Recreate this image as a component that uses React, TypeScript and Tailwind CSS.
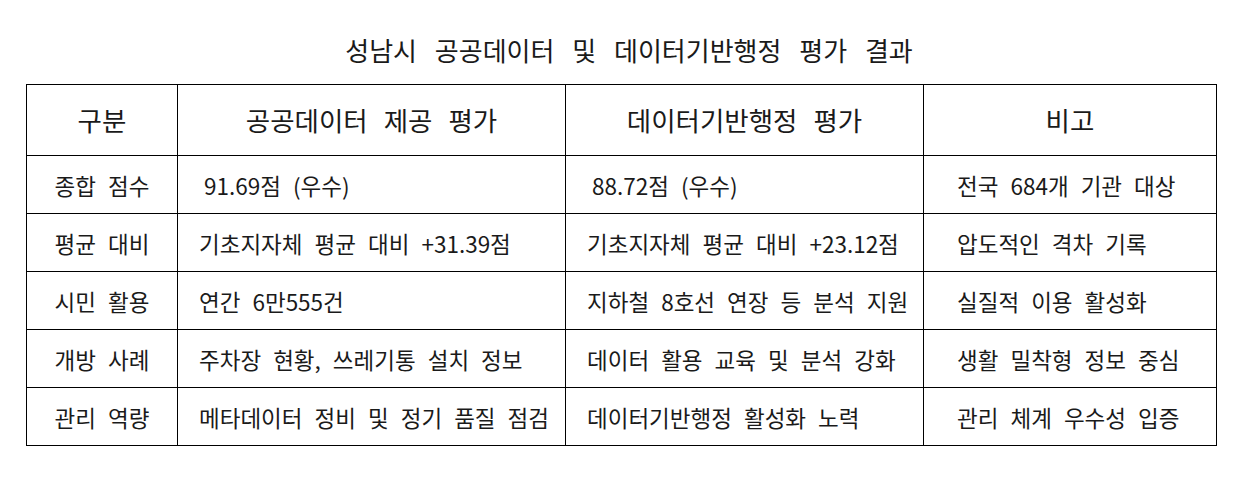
const rows = [
  {
    label: "종합 점수",
    open: "91.69점 (우수)",
    admin: "88.72점 (우수)",
    note: "전국 684개 기관 대상",
    indent: true,
  },
  {
    label: "평균 대비",
    open: "기초지자체 평균 대비 +31.39점",
    admin: "기초지자체 평균 대비 +23.12점",
    note: "압도적인 격차 기록",
  },
  {
    label: "시민 활용",
    open: "연간 6만555건",
    admin: "지하철 8호선 연장 등 분석 지원",
    note: "실질적 이용 활성화",
  },
  {
    label: "개방 사례",
    open: "주차장 현황, 쓰레기통 설치 정보",
    admin: "데이터 활용 교육 및 분석 강화",
    note: "생활 밀착형 정보 중심",
  },
  {
    label: "관리 역량",
    open: "메타데이터 정비 및 정기 품질 점검",
    admin: "데이터기반행정 활성화 노력",
    note: "관리 체계 우수성 입증",
  },
];

export default function App() {
  return (
    <div className="w-[1244px] h-[478px] bg-white text-[#1a1a1a] font-['Noto_Sans_CJK_KR',sans-serif]">
      {/* Title */}
      <div className="h-[84px] pt-[34px] pl-[14px] text-center text-[26px] leading-[32px] [word-spacing:12px]">
        성남시 공공데이터 및 데이터기반행정 평가 결과
      </div>

      {/* Table */}
      <table className="ml-[26px] w-[1190px] table-fixed border-collapse border border-black">
        <colgroup>
          <col className="w-[151px]" />
          <col className="w-[388px]" />
          <col className="w-[358px]" />
          <col className="w-[293px]" />
        </colgroup>
        <thead>
          <tr className="h-[71px] text-[26.5px] [word-spacing:10px]">
            <th className="border border-black font-normal">구분</th>
            <th className="border border-black font-normal">공공데이터 제공 평가</th>
            <th className="border border-black font-normal">데이터기반행정 평가</th>
            <th className="border border-black font-normal">비고</th>
          </tr>
        </thead>
        <tbody className="text-[22.5px] leading-[28px] [word-spacing:7px]">
          {rows.map((row) => (
            <tr key={row.label} className="h-[58px]">
              <td className="border border-black text-center">{row.label}</td>
              <td className={row.indent ? "border border-black pl-[26px]" : "border border-black pl-[21px]"}>
                {row.open}
              </td>
              <td className={row.indent ? "border border-black pl-[26px]" : "border border-black pl-[21px]"}>
                {row.admin}
              </td>
              <td className="border border-black pl-[33px]">{row.note}</td>
            </tr>
          ))}
        </tbody>
      </table>
    </div>
  );
}
